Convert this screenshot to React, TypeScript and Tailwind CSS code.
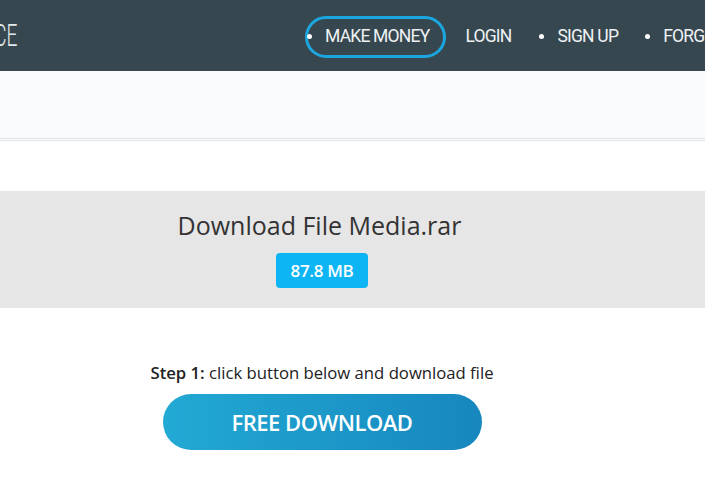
export default function App() {
  return (
    <div className="min-h-[480px] bg-white overflow-hidden" style={{ fontFamily: '"Open Sans", "Noto Sans", sans-serif' }}>
      {/* top bar */}
      <header className="h-[71px] bg-[#37474f] flex items-center whitespace-nowrap overflow-hidden">
        <div className="w-[17px] shrink-0 overflow-visible">
          <div
            className="ml-[-6px] text-[31px] font-light text-[#e3e9eb] leading-none scale-x-[0.62] origin-left"
            style={{ fontFamily: 'Roboto, sans-serif' }}
          >
            CE
          </div>
        </div>
        <nav
          className="ml-[288px] mt-[2px] flex items-center text-[17.5px] text-[#eef2f4] tracking-[-0.8px]"
          style={{ fontFamily: 'Roboto, "Liberation Sans", sans-serif' }}
        >
          <div className="flex items-center h-[42px] rounded-full border-[3px] border-[#1aa7e0] pr-[14px]">
            <span className="ml-[-1px] w-[5px] h-[5px] rounded-full bg-white" />
            <span className="ml-[13px]">MAKE MONEY</span>
          </div>
          <span className="ml-[19px]">LOGIN</span>
          <span className="ml-[28px] w-[5px] h-[5px] rounded-full bg-white" />
          <span className="ml-[13px]">SIGN UP</span>
          <span className="ml-[27px] w-[5px] h-[5px] rounded-full bg-white" />
          <span className="ml-[13px]">FORGOT PASSWORD</span>
        </nav>
      </header>

      {/* breadcrumb strip */}
      <div className="h-[70px] bg-[#fafbfd] border-b-[3px] border-double border-[#e3e5e8]" />

      <div className="w-[644px]">
        {/* file info */}
        <section className="mt-[50px] h-[117px] bg-[#e6e6e6] w-[705px]">
          <div className="w-[644px] flex flex-col items-center pt-[17px]">
            <h1 className="text-[25px] text-[#333333] leading-[34px] ml-[-5px]">Download File Media.rar</h1>
            <span className="mt-[11px] h-[35px] w-[92px] rounded-[4px] bg-[#0db5f4] text-white text-[17px] font-semibold flex items-center justify-center tracking-[-0.3px]">
              87.8 MB
            </span>
          </div>
        </section>

        {/* step */}
        <div className="flex flex-col items-center pt-[54px]">
          <p className="text-[16.7px] text-[#222222] leading-[22px]">
            <span className="font-semibold">Step 1:</span> click button below and download file
          </p>
          <button className="mt-[10px] h-[56px] w-[319px] rounded-full bg-gradient-to-r from-[#22a9d4] to-[#1787be] text-white text-[22px] font-semibold tracking-[-0.5px]">
            FREE DOWNLOAD
          </button>
        </div>
      </div>
    </div>
  );
}
